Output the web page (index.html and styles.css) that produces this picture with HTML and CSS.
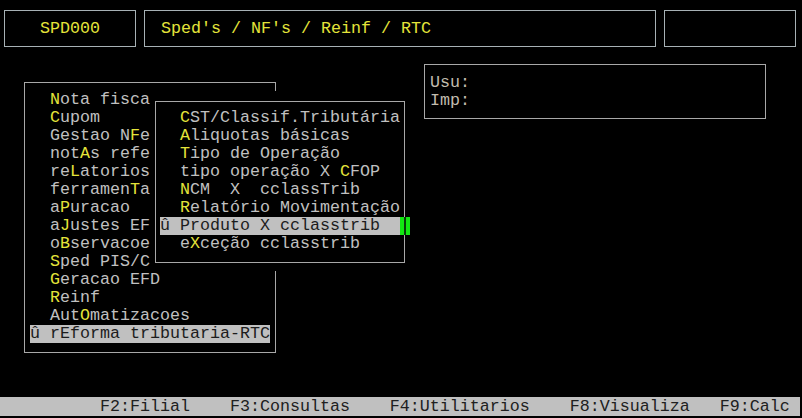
FILE: index.html
```html
<!DOCTYPE html>
<html lang="pt">
<head>
<meta charset="utf-8">
<title>SPD000</title>
<link rel="stylesheet" href="styles.css">
</head>
<body>
<div class="screen">
  <header class="header">
    <div class="hbox code">SPD000</div>
    <div class="hbox title">Sped's / NF's / Reinf / RTC</div>
    <div class="hbox blank"></div>
  </header>
  <main class="main">
    <div class="menu-wrap">
      <div class="menu">
        <div class="row">  <b>N</b>ota fisca</div>
        <div class="row">  <b>C</b>upom</div>
        <div class="row">  Gestao N<b>F</b>e</div>
        <div class="row">  not<b>A</b>s refe</div>
        <div class="row">  re<b>L</b>atorios</div>
        <div class="row">  ferramen<b>T</b>a</div>
        <div class="row">  a<b>P</b>uracao</div>
        <div class="row">  a<b>J</b>ustes EF</div>
        <div class="row">  o<b>B</b>servacoe</div>
        <div class="row">  <b>S</b>ped PIS/C</div>
        <div class="row">  <b>G</b>eracao EFD</div>
        <div class="row">  <b>R</b>einf</div>
        <div class="row">  Aut<b>O</b>matizacoes</div>
        <div class="row sel">û rEforma tributaria-RTC</div>
      </div>
      <div class="submenu-layer">
        <div class="submenu">
          <div class="row">  <b>C</b>ST/Classif.Tributária</div>
          <div class="row">  <b>A</b>liquotas básicas</div>
          <div class="row">  <b>T</b>ipo de Operação</div>
          <div class="row">  tipo operação X <b>C</b>FOP</div>
          <div class="row">  <b>N</b>CM  X  cclassTrib</div>
          <div class="row">  <b>R</b>elatório Movimentação</div>
          <div class="row sel">û Produto X cclasstrib</div>
          <div class="row">  e<b>X</b>ceção cclasstrib</div>
        </div>
        <div class="cursor"></div>
      </div>
    </div>
    <div class="info">
      <div class="row">Usu:</div>
      <div class="row">Imp:</div>
    </div>
  </main>
  <footer class="fkeys">F2:Filial    F3:Consultas    F4:Utilitarios    F8:Visualiza   F9:Calc</footer>
</div>
</body>
</html>
```

FILE: styles.css
```css
* {
  box-sizing: border-box;
}

html, body {
  margin: 0;
  padding: 0;
  background: #000;
}

body {
  width: 802px;
  height: 418px;
  overflow: hidden;
  font-family: "Courier New", "Nimbus Mono PS", "FreeMono", "Liberation Mono", monospace;
  font-size: 16.667px;
  line-height: 18px;
  color: #c0c0c0;
}

.screen {
  display: flex;
  flex-direction: column;
  height: 418px;
}

/* header boxes */
.header {
  display: flex;
  gap: 8px;
  padding: 10px 0 0 4px;
}

.hbox {
  height: 37px;
  border: 1px solid #a7b1b5;
  line-height: 35px;
  color: #e4e43a;
  white-space: pre;
}

.code {
  width: 132px;
  text-align: center;
}

.title {
  width: 512px;
  padding-left: 16px;
}

.blank {
  width: 132px;
}

/* main area */
.main {
  display: flex;
  align-items: flex-start;
}

.row {
  height: 18px;
  white-space: pre;
}

.row b {
  font-weight: normal;
  color: #e4e43a;
}

.row.sel {
  background: #c0c0c0;
  color: #1c1c1c;
}

.menu-wrap {
  position: relative;
  margin: 35px 0 0 24px;
}

.menu {
  width: 252px;
  border: 1px solid #a8a8a8;
  padding: 8px 5px 9px 5px;
}

.submenu-layer {
  position: absolute;
  left: 126px;
  top: 9px;
  width: 260px;
  height: 180px;
  background: #000;
}

.submenu {
  width: 250px;
  margin: 10px 0 0 5px;
  border: 1px solid #a8a8a8;
  padding: 7px 4px 9px 4px;
}

.cursor {
  position: absolute;
  left: 250px;
  top: 126px;
  width: 10px;
  height: 18px;
  background: linear-gradient(to right, #12e612 0, #12e612 4px, #0a3a0a 4px, #0a3a0a 6px, #12e612 6px);
}

.info {
  width: 342px;
  margin: 17px 0 0 148px;
  border: 1px solid #a8a8a8;
  padding: 9px 5px 8px 5px;
  color: #c2bcae;
}

/* function key bar */
.fkeys {
  margin-top: auto;
  margin-bottom: 2px;
  width: 800px;
  height: 19px;
  line-height: 19px;
  padding-left: 100px;
  background: #c0c0c0;
  color: #202020;
  white-space: pre;
}
```
